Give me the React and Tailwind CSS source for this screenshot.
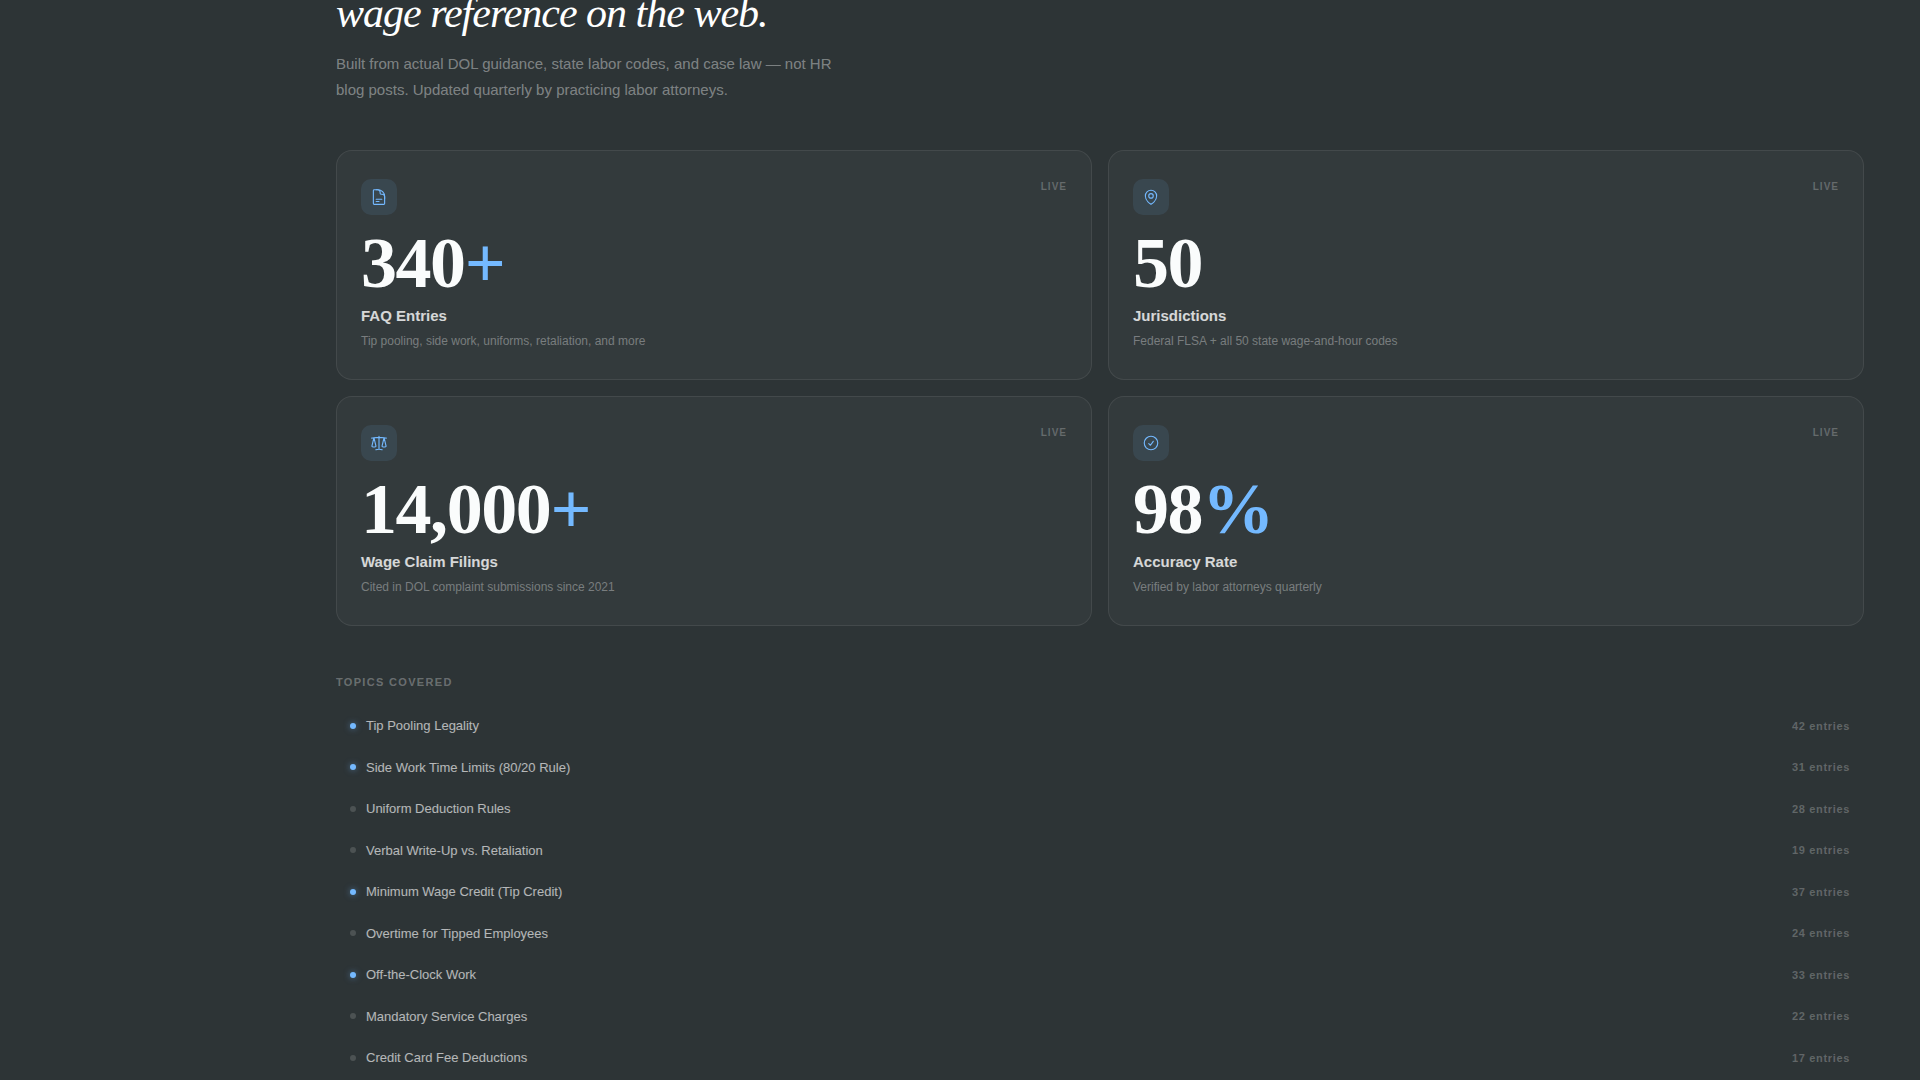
import React from "react";
import { HiOutlineMapPin, HiOutlineScale, HiOutlineCheckCircle } from "react-icons/hi2";

const DocumentIcon = ({ size }) => (
  <svg
    width={size}
    height={size}
    viewBox="0 0 24 24"
    fill="none"
    stroke="currentColor"
    strokeWidth="1.5"
    strokeLinecap="round"
    strokeLinejoin="round"
  >
    <path d="M19.5 14.25v-2.625a3.375 3.375 0 0 0-3.375-3.375h-1.5A1.125 1.125 0 0 1 13.5 7.125v-1.5a3.375 3.375 0 0 0-3.375-3.375H8.25" />
    <path d="M8.25 15h7.5M8.25 18H12" />
    <path d="M10.5 2.25H5.625c-.621 0-1.125.504-1.125 1.125v17.25c0 .621.504 1.125 1.125 1.125h12.75c.621 0 1.125-.504 1.125-1.125V11.25a9 9 0 0 0-9-9Z" />
  </svg>
);

const stats = [
  {
    icon: DocumentIcon,
    value: "340",
    suffix: "+",
    label: "FAQ Entries",
    desc: "Tip pooling, side work, uniforms, retaliation, and more",
  },
  {
    icon: HiOutlineMapPin,
    value: "50",
    suffix: "",
    label: "Jurisdictions",
    desc: "Federal FLSA + all 50 state wage-and-hour codes",
  },
  {
    icon: HiOutlineScale,
    value: "14,000",
    suffix: "+",
    label: "Wage Claim Filings",
    desc: "Cited in DOL complaint submissions since 2021",
  },
  {
    icon: HiOutlineCheckCircle,
    value: "98",
    suffix: "%",
    label: "Accuracy Rate",
    desc: "Verified by labor attorneys quarterly",
  },
];

const topics = [
  { name: "Tip Pooling Legality", count: 42, hot: true },
  { name: "Side Work Time Limits (80/20 Rule)", count: 31, hot: true },
  { name: "Uniform Deduction Rules", count: 28, hot: false },
  { name: "Verbal Write-Up vs. Retaliation", count: 19, hot: false },
  { name: "Minimum Wage Credit (Tip Credit)", count: 37, hot: true },
  { name: "Overtime for Tipped Employees", count: 24, hot: false },
  { name: "Off-the-Clock Work", count: 33, hot: true },
  { name: "Mandatory Service Charges", count: 22, hot: false },
  { name: "Credit Card Fee Deductions", count: 17, hot: false },
];

const StatCard = ({ icon: Icon, value, suffix, label, desc }) => (
  <article className="rounded-2xl border border-white/8 bg-white/3 px-6 py-7">
    <div className="flex items-start justify-between mb-3">
      <div className="w-9 h-9 rounded-[10px] bg-[#74b9ff]/10 text-[#74b9ff] flex items-center justify-center">
        <Icon size={18} />
      </div>
      <span className="text-[10px] leading-normal font-bold tracking-widest text-white/25">LIVE</span>
    </div>

    <p className="font-['Liberation_Serif',serif] text-7xl leading-none font-bold tracking-[-0.02em] text-[#fafcfc]">
      {value}
      {suffix && <span className="text-[#74b9ff]">{suffix}</span>}
    </p>
    <h3 className="mt-1.5 text-[15px] leading-[22px] font-bold text-white/80">{label}</h3>
    <p className="mt-1 text-xs leading-5 text-white/35">{desc}</p>
  </article>
);

const TopicRow = ({ name, count, hot }) => (
  <li className="flex items-center justify-between px-3.5 py-2.5">
    <div className="flex items-center gap-2.5">
      <span
        className={`w-1.5 h-1.5 rounded-full ${
          hot ? "bg-[#74b9ff] shadow-[0_0_6px_rgba(116,185,255,0.5)]" : "bg-white/15"
        }`}
      ></span>
      <span className="text-[13px] leading-normal text-white/65">{name}</span>
    </div>
    <span className="text-[11px] leading-normal font-bold tracking-[0.06em] text-white/25">{count} entries</span>
  </li>
);

const App = () => {
  return (
    <main className="min-h-screen overflow-hidden bg-[#2d3436] pl-84 pr-14 font-['Liberation_Sans',Arial,sans-serif]">
      {/* Intro */}
      <header className="-mt-[9px] mb-12">
        <h1 className="font-['Liberation_Serif',serif] text-[42px] leading-11 italic tracking-[-1px] text-white">
          wage reference on the web.
        </h1>
        <p className="mt-4 max-w-[500px] text-[15px] leading-[1.7] text-white/40">
          Built from actual DOL guidance, state labor codes, and case law — not HR blog posts. Updated quarterly by
          practicing labor attorneys.
        </p>
      </header>

      {/* Stats */}
      <section className="grid grid-cols-2 gap-4 mb-12">
        {stats.map((s) => (
          <StatCard key={s.label} {...s} />
        ))}
      </section>

      {/* Topics */}
      <section>
        <h2 className="mb-4 text-[11px] leading-4 font-bold tracking-[0.12em] text-white/30">TOPICS COVERED</h2>
        <ul className="flex flex-col gap-0.5">
          {topics.map((t) => (
            <TopicRow key={t.name} {...t} />
          ))}
        </ul>
      </section>
    </main>
  );
};

export default App;
